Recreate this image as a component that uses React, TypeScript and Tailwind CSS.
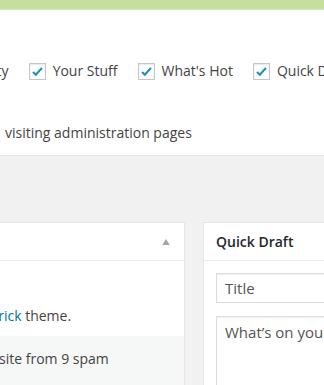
function Check({ label }: { label: string }) {
  return (
    <label className="flex items-center gap-[7px] whitespace-nowrap">
      <span className="flex h-[17px] w-[17px] items-center justify-center border border-[#c4c7ca] bg-white shadow-[inset_0_1px_2px_rgba(0,0,0,0.1)]">
        <svg viewBox="0 0 16 16" className="h-[13px] w-[13px]">
          <path d="M2.5 8.5 L6 12 L13.5 3.5" fill="none" stroke="#1e8cbe" strokeWidth="2.6" />
        </svg>
      </span>
      <span>{label}</span>
    </label>
  )
}

export default function App() {
  return (
    <div
      className="h-[385px] w-[324px] overflow-hidden bg-[#f1f1f1] text-[14px] text-[#444]"
      style={{ fontFamily: '"Open Sans", "Noto Sans", sans-serif' }}
    >
      <div className="h-[10px] border-b border-[#d4e6b6] bg-[#c6df9f]" />
      <div className="h-[146px] border-b border-[#e8e8e8] bg-white">
        <div className="flex items-center gap-[20px] pt-[51px] leading-[20px]">
          <span className="-ml-[38px] whitespace-nowrap">Activity</span>
          <Check label="Your Stuff" />
          <Check label="What's Hot" />
          <Check label="Quick Draft" />
        </div>
        <p className="mt-[42px] whitespace-nowrap pl-[5px] leading-[20px]">visiting administration pages</p>
      </div>

      <div className="mt-[66px] flex gap-[18px]">
        <div className="w-[185px] shrink-0 border border-l-0 border-[#e5e5e5] bg-white">
          <div className="flex h-[38px] items-center justify-end border-b border-[#eee] pr-[14px]">
            <svg viewBox="0 0 10 8" className="h-[6px] w-[8px]">
              <path d="M5 0 L10 8 L0 8 Z" fill="#a0a5aa" />
            </svg>
          </div>
          <div className="h-[75px] pt-[45px] leading-[20px]">
            <p className="-ml-[23px] whitespace-nowrap">
              Pat<a className="text-[#0073aa]">rick</a> theme.
            </p>
          </div>
          <div className="h-[60px] bg-[#f6f7f7] pt-[13px] leading-[20px]">
            <p className="-ml-[1px] whitespace-nowrap">site from 9 spam</p>
          </div>
        </div>

        <div className="w-[140px] shrink-0 border border-r-0 border-[#e5e5e5] bg-white">
          <div className="flex h-[38px] items-center border-b border-[#eee] pl-[12px]">
            <h2 className="whitespace-nowrap font-semibold text-[#23282d]">Quick Draft</h2>
          </div>
          <div className="pl-[12px] pt-[12px]">
            <div className="flex h-[30px] items-center border border-r-0 border-[#ddd] pl-[8px] text-[15px] text-[#555] shadow-[inset_0_1px_2px_rgba(0,0,0,0.07)]">
              Title
            </div>
            <div className="mt-[13px] h-[80px] whitespace-nowrap border border-r-0 border-[#ddd] pl-[8px] pt-[4px] text-[15px] text-[#555] shadow-[inset_0_1px_2px_rgba(0,0,0,0.07)]">
              What’s on your mind?
            </div>
          </div>
        </div>
      </div>
      <div className="-mt-[12px] ml-[178px] h-[2px] bg-[#c6df9f]" />
    </div>
  )
}
